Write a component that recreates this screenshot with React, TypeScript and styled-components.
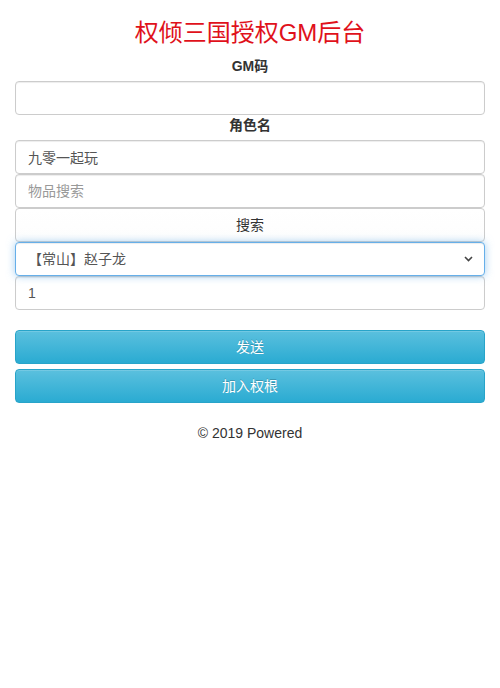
import styled, { createGlobalStyle } from "styled-components";

const GlobalStyle = createGlobalStyle`
  html, body {
    margin: 0;
    padding: 0;
    background: #fff;
  }
  body {
    font-family: "Liberation Sans", "Noto Sans CJK SC", sans-serif;
    font-size: 14px;
    line-height: 20px;
    color: #333;
  }
  * {
    box-sizing: border-box;
  }
`;

const Container = styled.div`
  padding: 0 15px;
`;

const Title = styled.h3`
  margin: 20px 0 10px;
  font-size: 24px;
  font-weight: 400;
  line-height: 1.1;
  text-align: center;
  color: #e0111b;
`;

const Label = styled.label`
  display: block;
  margin-bottom: 5px;
  font-weight: 700;
  text-align: center;
`;

const Field = styled.input`
  display: block;
  width: 100%;
  height: 34px;
  padding: 6px 12px;
  font: inherit;
  color: #555;
  background: #fff;
  border: 1px solid #ccc;
  border-radius: 4px;
  box-shadow: inset 0 1px 1px rgba(0, 0, 0, 0.075);
  outline: none;
  &::placeholder {
    color: #999;
  }
`;

const SearchButton = styled.button`
  display: block;
  width: 100%;
  height: 34px;
  padding: 6px 12px;
  font: inherit;
  color: #333;
  background: linear-gradient(to bottom, #fff 0, #fdfdfd 100%);
  border: 1px solid #ccc;
  border-radius: 4px;
  cursor: pointer;
`;

const SelectWrap = styled.div`
  position: relative;
`;

const Select = styled.select`
  display: block;
  width: 100%;
  height: 34px;
  padding: 6px 12px;
  font: inherit;
  color: #555;
  background: #fff;
  border: 1px solid #66afe9;
  border-radius: 4px;
  box-shadow: inset 0 1px 1px rgba(0, 0, 0, 0.075),
    0 0 8px rgba(102, 175, 233, 0.6);
  appearance: none;
  outline: none;
`;

const Chevron = styled.svg`
  position: absolute;
  right: 12px;
  top: 14px;
  pointer-events: none;
`;

const Actions = styled.div`
  display: flex;
  flex-direction: column;
  gap: 5px;
  margin-top: 20px;
`;

const InfoButton = styled.button`
  display: block;
  width: 100%;
  height: 34px;
  padding: 6px 12px;
  font: inherit;
  color: #fff;
  background: linear-gradient(to bottom, #5bc0de 0, #2aabd2 100%);
  border: 1px solid #28a4c9;
  border-radius: 4px;
  text-shadow: 0 -1px 0 rgba(0, 0, 0, 0.2);
  box-shadow: inset 0 1px 0 rgba(255, 255, 255, 0.15);
  cursor: pointer;
`;

const Footer = styled.p`
  margin: 20px 0 0;
  text-align: center;
  color: #333;
`;

export default function App() {
  return (
    <Container>
      <GlobalStyle />
      <Title>权倾三国授权GM后台</Title>
      <Label>GM码</Label>
      <Field type="text" />
      <Label>角色名</Label>
      <Field type="text" defaultValue="九零一起玩" />
      <Field type="text" placeholder="物品搜索" />
      <SearchButton>搜索</SearchButton>
      <SelectWrap>
        <Select defaultValue="zzl">
          <option value="zzl">【常山】赵子龙</option>
        </Select>
        <Chevron width="9" height="6" viewBox="0 0 9 6">
          <path d="M1 1 L4.5 4.5 L8 1" fill="none" stroke="#444" strokeWidth="1.6" />
        </Chevron>
      </SelectWrap>
      <Field type="text" defaultValue="1" />
      <Actions>
        <InfoButton>发送</InfoButton>
        <InfoButton>加入权根</InfoButton>
      </Actions>
      <Footer>© 2019 Powered</Footer>
    </Container>
  );
}
